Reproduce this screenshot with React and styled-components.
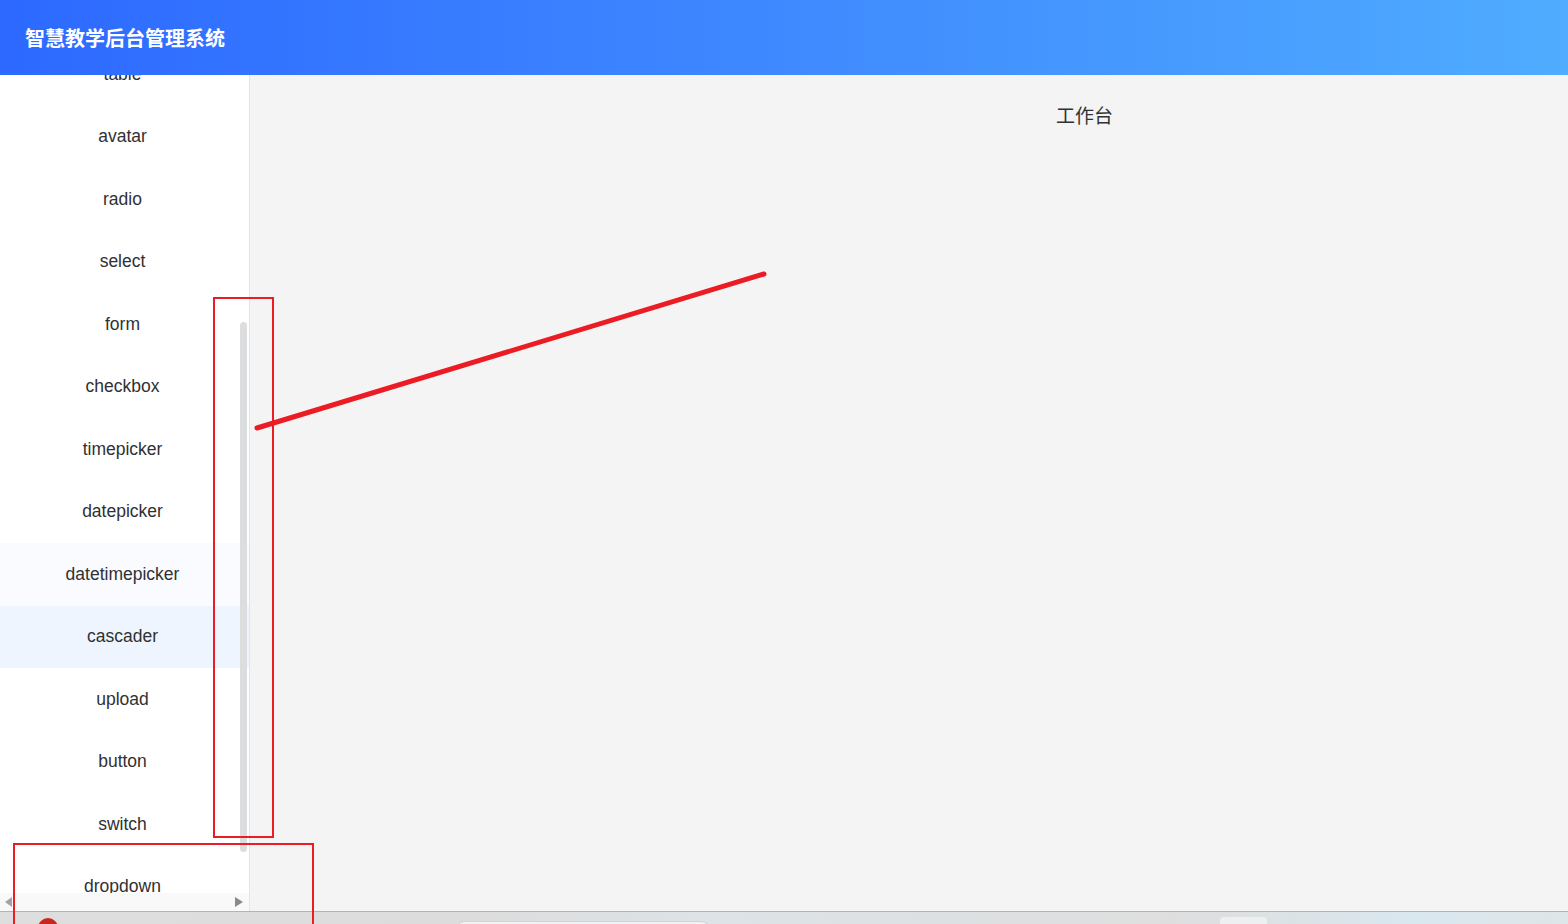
import React, { useEffect, useRef } from 'react'
import styled, { createGlobalStyle, css } from 'styled-components'

const GlobalStyle = createGlobalStyle`
    html, body {
        margin:0;
        padding:0;
        height:924px;
        overflow:hidden;
        font-family:"Liberation Sans", "Noto Sans CJK SC", sans-serif;
    }
    #root {
        height:924px;
    }
`

const PageStyle = styled.div`
    position:relative;
    width:1568px;
    height:924px;
    display:flex;
    flex-direction:column;
    background:#f4f4f4;
`

const HeaderStyle = styled.div`
    flex:0 0 75px;
    display:flex;
    align-items:center;
    padding:0 0 0 25px;
    background:linear-gradient(90deg, #2d69ff 0%, #3d86ff 45%, #4facfe 100%);
    position:relative;
    z-index:2;
`

const TitleStyle = styled.div`
    color:#fff;
    font-family:"Noto Sans CJK SC", sans-serif;
    font-weight:700;
    font-size:20px;
    line-height:1;
`

const BodyStyle = styled.div`
    flex:1 1 0%;
    display:flex;
    min-height:0;
`

const SidebarStyle = styled.div`
    position:relative;
    flex:0 0 249px;
    display:flex;
    flex-direction:column;
    background:#fff;
    border-right:1px solid #e4e4e4;
`

const MenuScrollStyle = styled.div`
    flex:1 1 0%;
    overflow:hidden;
`

const MenuItemStyle = styled.div`
    height:62.5px;
    display:flex;
    align-items:center;
    justify-content:center;
    padding:0 4px 0 0;
    color:#303133;
    font-size:17.5px;
    ${props => props.tone === 'hover' && css`
        background:#f9fbfe;
    `}
    ${props => props.tone === 'active' && css`
        background:#eef5fe;
    `}
`

const ThumbStyle = styled.div`
    position:absolute;
    left:240px;
    top:247px;
    width:7px;
    height:530px;
    border-radius:4px;
    background:#dcdddf;
`

const HBarStyle = styled.div`
    flex:0 0 18px;
    display:flex;
    align-items:center;
    justify-content:space-between;
    padding:0 5px 0 5px;
    background:#f9f9f9;
`

const ArrowStyle = styled.div`
    width:0;
    height:0;
    border-top:5px solid transparent;
    border-bottom:5px solid transparent;
    ${props => props.dir === 'left' ? css`
        border-right:7px solid #a3a3a3;
    ` : css`
        border-left:8px solid #8a8a8a;
        margin-right:1px;
    `}
`

const MainStyle = styled.div`
    flex:1 1 0%;
    background:#f4f4f4;
    padding:28px 0 0 806px;
`

const PageTitleStyle = styled.div`
    font-family:"Noto Sans CJK SC", sans-serif;
    font-size:19px;
    color:#303133;
    line-height:24px;
`

const TaskbarStyle = styled.div`
    flex:0 0 12px;
    display:flex;
    align-items:flex-start;
    overflow:hidden;
    border-top:1px solid #b3b3b3;
    background:linear-gradient(90deg, #dedede 0%, #dcdcdc 30%, #dde3e7 45%, #dedede 75%, #d9e7ef 90%, #dfe5e8 100%);
`

const TaskDotStyle = styled.div`
    flex:0 0 20px;
    height:20px;
    margin:6px 0 0 38px;
    border-radius:50%;
    background:#c9281f;
`

const TaskSearchStyle = styled.div`
    flex:0 0 254px;
    height:20px;
    margin:9px 0 0 397px;
    border:1px solid #cfd3d6;
    border-radius:10px;
    background:#f1f2f3;
`

const TaskButtonStyle = styled.div`
    flex:0 0 47px;
    height:20px;
    margin:5px 0 0 509px;
    border-radius:4px;
    background:#eeeff0;
`

const MarkStyle = styled.div`
    position:absolute;
    border:2px solid #ec1c24;
    pointer-events:none;
    z-index:5;
`

const MarkLayerStyle = styled.svg`
    position:absolute;
    left:0;
    top:0;
    width:1568px;
    height:924px;
    pointer-events:none;
    z-index:6;
`

const menuItems = [
    { label: 'table' },
    { label: 'avatar' },
    { label: 'radio' },
    { label: 'select' },
    { label: 'form' },
    { label: 'checkbox' },
    { label: 'timepicker' },
    { label: 'datepicker' },
    { label: 'datetimepicker', tone: 'hover' },
    { label: 'cascader', tone: 'active' },
    { label: 'upload' },
    { label: 'button' },
    { label: 'switch' },
    { label: 'dropdown' },
]

function App() {
    const scrollRef = useRef(null)

    // the menu list is scrolled down a little, "table" half hidden under the header
    useEffect(() => {
        if (scrollRef.current) scrollRef.current.scrollTop = 32
    }, [])

    return (
        <PageStyle>
            <GlobalStyle />
            <HeaderStyle>
                <TitleStyle>智慧教学后台管理系统</TitleStyle>
            </HeaderStyle>
            <BodyStyle>
                <SidebarStyle>
                    <MenuScrollStyle ref={scrollRef}>
                        {menuItems.map(item => (
                            <MenuItemStyle key={item.label} tone={item.tone}>
                                {item.label}
                            </MenuItemStyle>
                        ))}
                    </MenuScrollStyle>
                    <ThumbStyle />
                    <HBarStyle>
                        <ArrowStyle dir="left" />
                        <ArrowStyle dir="right" />
                    </HBarStyle>
                </SidebarStyle>
                <MainStyle>
                    <PageTitleStyle>工作台</PageTitleStyle>
                </MainStyle>
            </BodyStyle>
            <TaskbarStyle>
                <TaskDotStyle />
                <TaskSearchStyle />
                <TaskButtonStyle />
            </TaskbarStyle>

            <MarkStyle style={{ left: 213, top: 297, width: 57, height: 537 }} />
            <MarkStyle style={{ left: 13, top: 843, width: 297, height: 90 }} />
            <MarkLayerStyle viewBox="0 0 1568 924">
                <line x1="257" y1="428" x2="764" y2="274" stroke="#ec1c24" strokeWidth="5" strokeLinecap="round" />
            </MarkLayerStyle>
        </PageStyle>
    )
}

export default App
